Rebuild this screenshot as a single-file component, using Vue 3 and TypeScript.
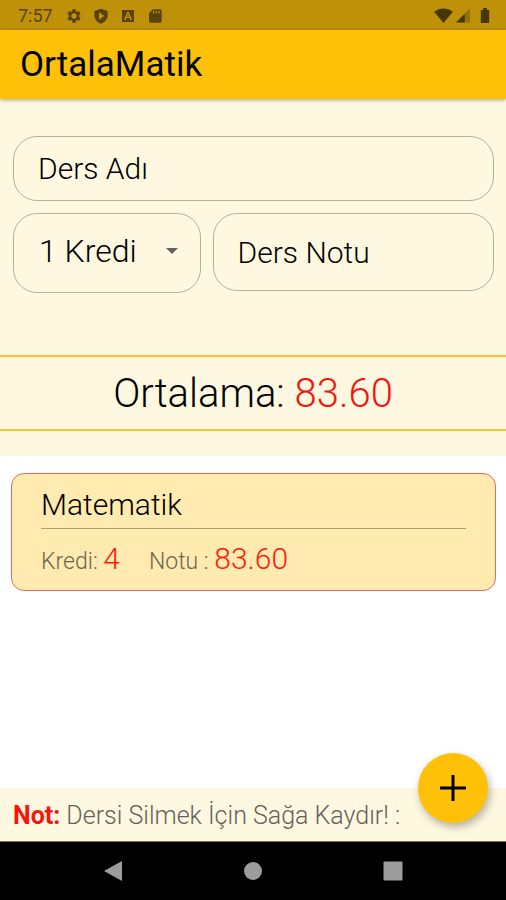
<script setup lang="ts">
import { computed, ref } from 'vue'

interface Course {
  id: number
  name: string
  credit: number
  grade: number
}

const credits = [1, 2, 3, 4, 5, 6, 7, 8, 9, 10]
const name = ref('')
const credit = ref(1)
const grade = ref('')
const courses = ref<Course[]>([{ id: 1, name: 'Matematik', credit: 4, grade: 83.6 }])

const average = computed(() => {
  const total = courses.value.reduce((sum, c) => sum + c.credit, 0)
  const weighted = courses.value.reduce((sum, c) => sum + c.credit * c.grade, 0)
  return total ? weighted / total : 0
})

function addCourse() {
  const value = Number(grade.value)
  if (!name.value || !grade.value || Number.isNaN(value)) return
  courses.value.push({ id: Date.now(), name: name.value, credit: credit.value, grade: value })
  name.value = ''
  grade.value = ''
}
</script>

<template>
  <div class="screen">
    <div class="status">
      <span class="clock">7:57</span>
      <div class="status-left">
        <svg viewBox="0 0 24 24" aria-hidden="true">
          <path fill-rule="evenodd" d="M19.4 13a7.500 7.500 0 0 0 0-2l2.200-1.700a.5.5 0 0 0 .1-.6l-2-3.500a.5.5 0 0 0-.6-.2l-2.500 1a7.300 7.300 0 0 0-1.700-1L14.500 2.400A.5.5 0 0 0 14 2h-4a.5.5 0 0 0-.5.4L9.100 5a7.300 7.300 0 0 0-1.700 1l-2.500-1a.5.5 0 0 0-.6.200l-2 3.500a.5.5 0 0 0 .1.6L4.600 11a7.500 7.500 0 0 0 0 2l-2.200 1.700a.5.5 0 0 0-.1.6l2 3.500c.1.2.4.3.6.2l2.500-1a7.300 7.300 0 0 0 1.700 1l.4 2.600c0 .2.2.4.5.4h4c.3 0 .5-.2.500-.4l.4-2.600a7.300 7.300 0 0 0 1.700-1l2.500 1c.2.1.5 0 .6-.2l2-3.500a.5.5 0 0 0-.1-.6zM12 16a4 4 0 1 1 0-8 4 4 0 0 1 0 8z" />
        </svg>
        <svg viewBox="0 0 24 24" aria-hidden="true">
          <path fill-rule="evenodd" d="M12 1 2 4.500V11c0 5.800 4 10.500 10 12.500 6-2 10-6.700 10-12.500V4.500zM9 6.500l8 5.500-8 5.500z" />
        </svg>
        <svg viewBox="0 0 24 24" aria-hidden="true">
          <path fill-rule="evenodd" d="M3 3h18v18H3zm3 15h2.500l1-3h5l1 3H18L13.300 6h-2.600zm4.300-5L12 8.500l1.700 4.500z" />
        </svg>
        <svg viewBox="0 0 24 24" aria-hidden="true">
          <path fill-rule="evenodd" d="M9 2h11a2 2 0 0 1 2 2v16a2 2 0 0 1-2 2H5a2 2 0 0 1-2-2V8zm0 3v3h2V5zm4 0v3h2V5zm4 0v3h2V5z" />
        </svg>
      </div>
      <div class="status-right">
        <svg class="wifi" viewBox="0 0 20 16" aria-hidden="true"><path d="M0 4C6-.8 14-.8 20 4L10 16z" /></svg>
        <svg class="signal" viewBox="0 0 16 16" aria-hidden="true">
          <path d="M16 0v16H0z" opacity=".35" /><path d="M10 6v10H0z" />
        </svg>
        <svg class="battery" viewBox="0 0 10 16" aria-hidden="true"><path d="M3 0h4v2h2.500v14h-9V2H3z" /></svg>
      </div>
    </div>

    <header class="app-bar"><h1>OrtalaMatik</h1></header>

    <main>
      <section class="top">
        <form class="form" @submit.prevent="addCourse">
          <input v-model="name" class="field name" type="text" placeholder="Ders Adı" aria-label="Ders Adı" />
          <div class="row">
            <div class="select-box">
              <select v-model="credit" class="field" aria-label="Kredi">
                <option v-for="n in credits" :key="n" :value="n">{{ n }} Kredi</option>
              </select>
              <svg class="caret" viewBox="0 0 12 6" aria-hidden="true"><path d="M0 0h12L6 6z" /></svg>
            </div>
            <input v-model="grade" class="field grade" type="text" inputmode="decimal" placeholder="Ders Notu" aria-label="Ders Notu" />
          </div>
        </form>
        <p class="average">Ortalama: <span class="red">{{ average.toFixed(2) }}</span></p>
      </section>

      <ul class="list">
        <li v-for="c in courses" :key="c.id" class="card">
          <h2>{{ c.name }}</h2>
          <div class="details">
            <span>Kredi: <b>{{ c.credit }}</b></span>
            <span>Notu : <b>{{ c.grade.toFixed(2) }}</b></span>
          </div>
        </li>
      </ul>
    </main>

    <footer class="note">
      <p><strong>Not:</strong> Dersi Silmek İçin Sağa Kaydır! :</p>
      <button class="fab" type="button" aria-label="Ekle" @click="addCourse">
        <svg viewBox="0 0 26 26" aria-hidden="true"><path d="M13 0v26M0 13h26" /></svg>
      </button>
    </footer>

    <nav class="nav">
      <button type="button" aria-label="Geri"><svg viewBox="0 0 20 20"><path d="M19 0v20L1 10z" /></svg></button>
      <button type="button" aria-label="Ana ekran"><svg viewBox="0 0 20 20"><circle cx="10" cy="10" r="9" /></svg></button>
      <button type="button" aria-label="Son uygulamalar"><svg viewBox="0 0 20 20"><rect width="19" height="19" x=".5" y=".5" rx="1" /></svg></button>
    </nav>
  </div>
</template>

<style>
body {
  margin: 0;
  background: #fff;
}
</style>

<style scoped>
.screen {
  display: flex;
  flex-direction: column;
  min-height: 100vh;
  font-family: Roboto, sans-serif;
  font-weight: 300;
  color: #000;
}

h1,
h2,
p,
ul {
  margin: 0;
  padding: 0;
}

.status {
  display: flex;
  align-items: center;
  height: 30px;
  padding: 1px 16px 0 18px;
  box-sizing: border-box;
  background: #bf9108;
  color: #59430a;
  fill: #59430a;
}

.clock {
  font-size: 18px;
  font-weight: 400;
}

.status-left {
  display: flex;
  gap: 11px;
  margin-left: 13px;
}

.status-left svg {
  width: 16px;
  height: 16px;
}

.status-right {
  display: flex;
  margin-left: auto;
  fill: #463600;
}

.wifi {
  width: 19px;
  height: 15px;
}

.signal {
  width: 14px;
  height: 15px;
  margin-left: 3px;
}

.battery {
  width: 10px;
  height: 15px;
  margin-left: 10px;
}

.app-bar {
  position: relative;
  display: flex;
  align-items: center;
  height: 69px;
  padding: 0 20px;
  background: #ffc107;
  box-shadow: 0 1px 4px rgba(0, 0, 0, 0.35);
}

h1 {
  font-size: 35px;
  font-weight: 400;
  line-height: 38px;
}

main {
  flex: 1;
}

.top {
  padding: 37px 0 25px;
  background: #fff8e1;
}

.form {
  display: flex;
  flex-direction: column;
  gap: 12px;
  padding: 0 12px 0 13px;
}

.row {
  display: grid;
  grid-template-columns: 2fr 3fr;
  gap: 12px;
  align-items: start;
}

.field {
  width: 100%;
  min-width: 0;
  box-sizing: border-box;
  margin: 0;
  padding: 0 24px;
  border: 1px solid #b5af9d;
  border-radius: 24px;
  outline: 0;
  background: transparent;
  font: inherit;
  font-size: 30px;
  color: #000;
}

.field::placeholder {
  color: #000;
  opacity: 1;
}

.name {
  height: 65px;
}

.grade {
  height: 78px;
}

.select-box {
  position: relative;
}

.select-box .field {
  display: block;
  height: 80px;
  padding: 0 40px 4px 25px;
  font-size: 32px;
  appearance: none;
}

.caret {
  position: absolute;
  top: 35px;
  right: 23px;
  width: 12px;
  height: 6px;
  fill: #616161;
  pointer-events: none;
}

.average {
  margin-top: 62px;
  padding-top: 2px;
  border: solid #f9c22e;
  border-width: 2px 0;
  font-size: 40px;
  line-height: 70px;
  text-align: center;
}

.red {
  color: #f5130d;
}

.list {
  display: flex;
  flex-direction: column;
  gap: 16px;
  padding: 17px 10px 16px 11px;
  list-style: none;
}

.card {
  padding: 12px 29px 10px;
  border: 1px solid #e8695a;
  border-radius: 13px;
  background: #ffeab0;
}

h2 {
  padding-bottom: 4px;
  border-bottom: 1px solid #aaa07e;
  font-size: 30px;
  font-weight: 300;
  line-height: 38px;
}

.details {
  display: flex;
  gap: 29px;
  padding-top: 12px;
  font-size: 23px;
  line-height: 36px;
  color: #6e664e;
}

.details b {
  font-size: 30px;
  font-weight: 300;
  color: #ff1a0d;
}

.note {
  position: relative;
  padding: 2px 100px 0 13px;
  border-bottom: 1px solid #77745f;
  background: #fff8e1;
  font-size: 25px;
  line-height: 51px;
  color: #64615a;
  white-space: nowrap;
}

.note strong {
  font-weight: 700;
  color: #fa130a;
}

.fab {
  position: absolute;
  top: -35px;
  right: 18px;
  display: grid;
  place-items: center;
  width: 70px;
  height: 70px;
  padding: 0;
  border: 0;
  border-radius: 50%;
  background: #ffc107;
  box-shadow: 2px 4px 8px rgba(0, 0, 0, 0.3);
}

.fab svg {
  width: 26px;
  height: 26px;
  stroke: #000;
  stroke-width: 3;
}

.nav {
  display: flex;
  justify-content: space-around;
  align-items: center;
  height: 58px;
  padding: 0 43px;
  background: #000;
}

.nav button {
  display: grid;
  padding: 0;
  border: 0;
  background: none;
}

.nav svg {
  width: 20px;
  height: 20px;
  fill: #9c9c9c;
}
</style>
